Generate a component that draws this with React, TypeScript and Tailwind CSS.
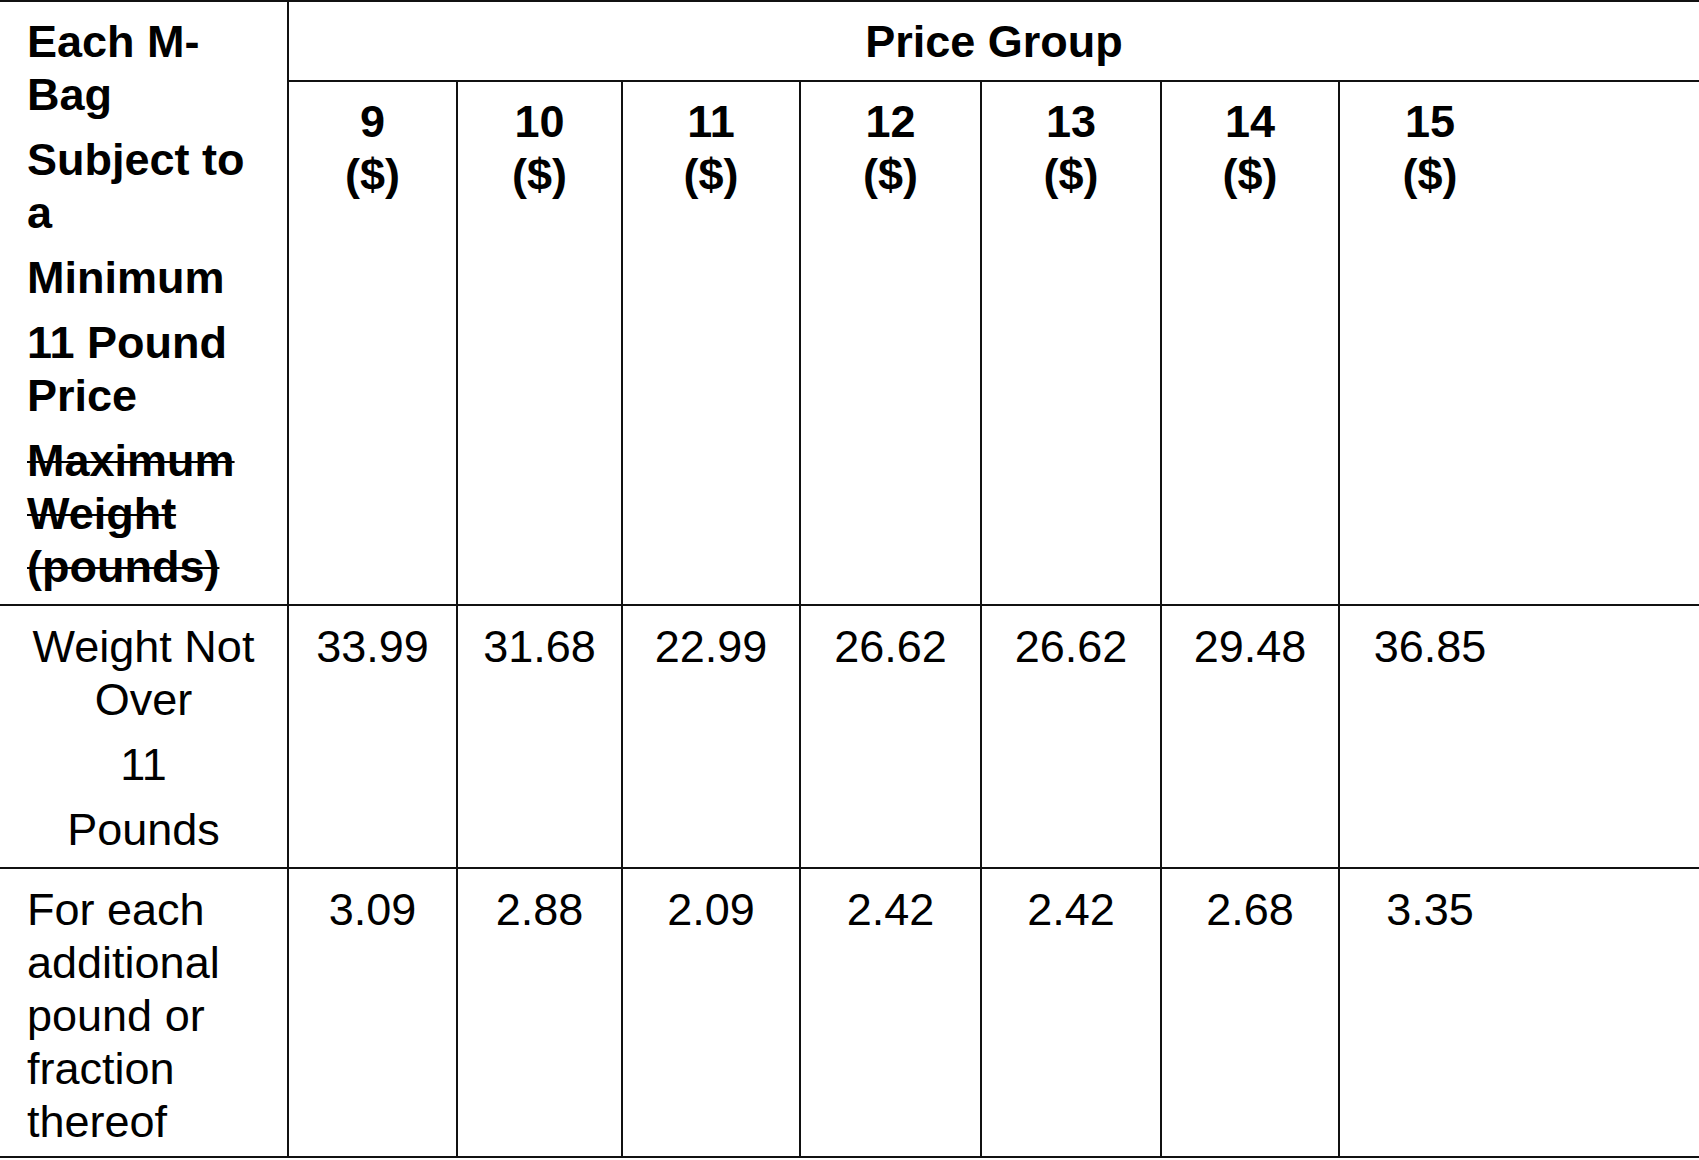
import React from "react";

const nums = ["9", "10", "11", "12", "13", "14", "15"];
const row1 = ["33.99", "31.68", "22.99", "26.62", "26.62", "29.48", "36.85"];
const row2 = ["3.09", "2.88", "2.09", "2.42", "2.42", "2.68", "3.35"];

function rb(i: number) {
  return i < 6 ? "border-r-2 border-[#111]" : "";
}

export default function App() {
  return (
    <div className="w-[1699px] h-[1160px] bg-white text-black font-['Liberation_Sans',Arial,sans-serif] text-[45px] leading-[53px] overflow-hidden">
      <div className="grid grid-cols-[289px_169px_165px_178px_181px_180px_178px_180px_1fr] grid-rows-[80px_524px_263px_289px] border-t-2 border-[#111]">
        {/* Header left cell */}
        <div className="row-span-2 border-r-2 border-b-2 border-[#111] px-[27px] pt-[13px] font-bold flex flex-col gap-[12px]">
          <p>Each M-Bag</p>
          <p>Subject to a</p>
          <p>Minimum</p>
          <p>11 Pound Price</p>
          <p className="line-through decoration-2">Maximum Weight (pounds)</p>
        </div>
        {/* Price Group */}
        <div className="col-span-8 border-b-2 border-[#111] pt-[13px] text-center font-bold">
          Price Group
        </div>
        {/* Sub header */}
        {nums.map((n, i) => (
          <div key={n} className={`border-b-2 border-[#111] pt-[13px] text-center font-bold ${rb(i)}`}>
            {n}
            <br />
            ($)
          </div>
        ))}
        <div className="border-b-2 border-[#111]" />

        {/* Row 1 */}
        <div className="border-r-2 border-b-2 border-[#111] px-[20px] pt-[14px] text-center flex flex-col gap-[12px]">
          <p>Weight Not Over</p>
          <p>11</p>
          <p>Pounds</p>
        </div>
        {row1.map((v, i) => (
          <div key={i} className={`border-b-2 border-[#111] pt-[14px] text-center ${rb(i)}`}>
            {v}
          </div>
        ))}
        <div className="border-b-2 border-[#111]" />

        {/* Row 2 */}
        <div className="border-r-2 border-b-2 border-[#111] px-[27px] pt-[14px] text-left">
          <p>For each additional pound or fraction thereof</p>
        </div>
        {row2.map((v, i) => (
          <div key={i} className={`border-b-2 border-[#111] pt-[14px] text-center ${rb(i)}`}>
            {v}
          </div>
        ))}
        <div className="border-b-2 border-[#111]" />
      </div>
    </div>
  );
}
